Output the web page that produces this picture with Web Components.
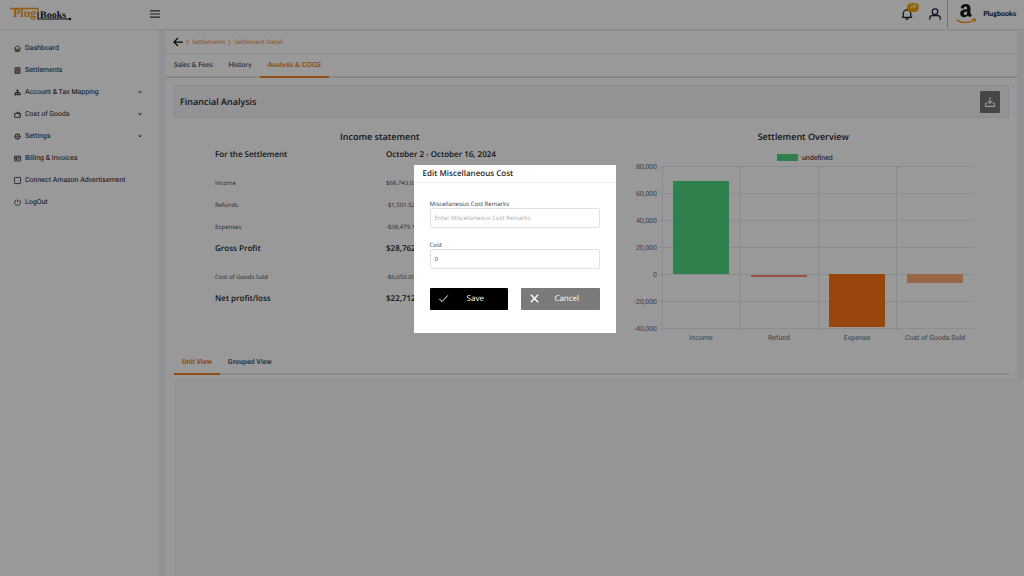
<!DOCTYPE html>
<html lang="en">
<head>
<meta charset="utf-8">
<meta name="viewport" content="width=device-width, initial-scale=1">
<title>Plugbooks - Settlement Detail</title>
<style>
html,body{margin:0;min-height:100%}
body{font-family:"Open Sans","Noto Sans",sans-serif;background:#f8f8fb;color:#212529;text-rendering:geometricPrecision}
</style>
</head>
<body>
<plug-app></plug-app>
<script>
const define=(name,html,setup)=>customElements.define(name,class extends HTMLElement{
  connectedCallback(){
    if(this.shadowRoot)return;
    const root=this.attachShadow({mode:"open"});
    const t=document.createElement("template");
    t.innerHTML="<style>*{box-sizing:border-box}button,input{text-rendering:inherit}</style>"+(typeof html==="function"?html(this):html);
    root.append(t.content.cloneNode(true));
    if(setup)setup(this,root);
  }
});

const icons={
  home:'<path d="M.5 8 8 1.500 15.500 8M3 7v7.500h10V7M5.500 9.500h5M6.500 14v-3h3v3"/>',
  book:'<path d="M2.500 1.500h11v13h-11zM5 4.500h6v4H5zM2.500 11.500h11"/>',
  tree:'<path fill="currentColor" stroke="none" d="M6 1.500h4v4H6zM1 10h4v4H1zM6 10h4v4H6zM11 10h4v4h-4z"/><path d="M8 5v5M3 10V8h10v2"/>',
  wallet:'<path d="M1.500 5.500h13v9h-13zM4 5.500l7-3.500 1.500 3.500M10.500 9h4"/>',
  gear:'<circle cx="8" cy="8" r="5.500"/><circle cx="8" cy="8" r="2"/><path stroke-width="2" d="M8 .5v2M8 13.500v2M.5 8h2M13.500 8h2M2.700 2.700l1.500 1.500M11.800 11.800l1.500 1.500M2.700 13.300l1.500-1.500M11.800 4.200l1.500-1.500"/>',
  card:'<rect x="1" y="2.500" width="14" height="11" rx="1"/><path d="M1 5.500h14M4 8.500h3v2H4zM9 9.500h3.500"/>',
  square:'<rect x="1" y="1" width="14" height="14" rx="1.500"/>',
  power:'<path d="M8 1v6.500M4.500 2.500a6.500 6.500 0 1 0 7 0"/>',
  menu:'<path d="M0 3h16M0 8h16M0 13h16"/>',
  chevron:'<path stroke-width="4" d="m2 5 6 5.500L14 5"/>',
  next:'<path stroke-width="3" d="m5 0 6 8-6 8"/>',
  back:'<path stroke-width="2" d="M16 8H1.500M8 1.500 1.500 8 8 14.500"/>',
  bell:'<path d="M1 12.500h14M3 12.500V7.500a5 5 0 0 1 10 0v5M6 13a2 2 0 0 0 4 0M8 1v1.500"/>',
  user:'<circle cx="8" cy="5" r="3.700"/><path d="M1 15.500v-2a3.500 3.500 0 0 1 3.500-3.500h7a3.500 3.500 0 0 1 3.500 3.500v2"/>',
  download:'<path d="M8 .5v9M4.500 6.500 8 10l3.500-3.500M4 10H1v5h14v-5h-3"/>',
  check:'<path d="m.5 9 5 4.500L15.500 2.500"/>',
  close:'<path stroke-width="2.500" d="m1.500 1.500 13 13M14.500 1.500l-13 13"/>'
};
define("ui-icon",el=>`<style>:host{display:inline-flex;flex:none;width:var(--size,7px);height:var(--size,7px)}svg{width:100%;height:100%;overflow:visible}</style>
<svg viewBox="0 0 16 16" fill="none" stroke="currentColor" stroke-width="1.7" aria-hidden="true">${icons[el.getAttribute("name")]}</svg>`);

define("plug-logo",`<style>:host{display:block}svg{display:block;width:62px;height:15px}text{font-family:"Liberation Serif",serif;font-weight:700}</style>
<svg viewBox="0 0 62 15" role="img" aria-label="PlugBooks">
<path d="M0 2.500h28.500M28 2v4" stroke="#f7941d" stroke-width="1.300" fill="none"/>
<text x="3" y="11" font-size="12" fill="#f7941d">Plug</text>
<text x="30" y="12" font-size="10" fill="#14161c">Books</text>
<path d="M28 6v7h32" stroke="#14161c" stroke-width="1.200" fill="none"/><circle cx="60" cy="13" r="1.200" fill="#14161c"/>
</svg>`);

define("top-bar",`<style>
:host{display:flex;align-items:center;height:30px;background:#fff;border-bottom:1px solid #e4e8ee;padding:0 8px 0 10px}
plug-logo{flex:none;width:140px;padding-bottom:2px}
button{border:0;background:none;padding:0;color:#343a46;display:flex;position:relative}
.menu{--size:10px;padding-bottom:2px}
.right{margin-left:auto;display:flex;align-items:center;height:100%;padding-bottom:2px}
.bell,.user{--size:12px;color:#222730}.bell{margin-right:16px}
.badge{position:absolute;left:6px;top:-5px;min-width:12px;height:9px;border-radius:5px;background:#f7a100;color:#fff;font:600 5px/9px "Open Sans",sans-serif;text-align:center}
.brand{display:flex;align-items:center;height:28px;border-left:1px solid #f5b942;margin-left:6px;padding-left:8px;gap:7px;font:900 7px/10px Lato,sans-serif;color:#212529}
.amz{width:20px;height:21px;display:block}
</style>
<plug-logo></plug-logo>
<button class="menu" aria-label="Menu"><ui-icon name="menu"></ui-icon></button>
<div class="right"><button class="bell" aria-label="Notifications"><ui-icon name="bell"></ui-icon><span class="badge">28</span></button>
<button class="user" aria-label="Account"><ui-icon name="user"></ui-icon></button>
<div class="brand"><svg class="amz" viewBox="0 0 19 20" aria-hidden="true"><path d="M4.500 5C4.700 2 6.800 1 9.200 1c2.900 0 4.500 1.300 4.500 3.800v5l1.500 2-2.200 1.800-1.700-1.700C9.400 14.300 4 14.300 4 10c0-3.200 3-4 6.600-4.100 0-1.700-.2-2.600-1.500-2.600-.9 0-1.400.6-1.600 1.900zM10.600 8c-1.700.1-3.200.4-3.200 2 0 2.300 3.200 2 3.200-1z" fill="#16181d" fill-rule="evenodd"/><path d="M.5 16c5 3.500 11.500 3.300 16 .8M15.500 15.800l2.700-.2-.6 2.400" fill="none" stroke="#f7941d" stroke-width="1.400"/></svg><span>Plugbooks</span></div></div>`);

define("nav-item",el=>`<style>
:host{display:block}
a{display:flex;align-items:center;height:22px;gap:4px;color:#14181f;text-decoration:none;font:400 7px/10px Roboto,sans-serif}
.chev{margin-left:auto;--size:4px}
</style><a href="#"><ui-icon name="${el.getAttribute("icon")}"></ui-icon><slot></slot>${el.hasAttribute("sub")?'<ui-icon class="chev" name="chevron"></ui-icon>':""}</a>`);

define("side-nav",`<style>:host{display:block;background:#fff;padding:7px 17px 0 14px}</style>
<nav><nav-item icon="home">Dashboard</nav-item><nav-item icon="book">Settlements</nav-item><nav-item icon="tree" sub>Account &amp; Tax Mapping</nav-item><nav-item icon="wallet" sub>Cost of Goods</nav-item><nav-item icon="gear" sub>Settings</nav-item><nav-item icon="card">Billing &amp; Invoices</nav-item><nav-item icon="square">Connect Amazon Advertisement</nav-item><nav-item icon="power">LogOut</nav-item></nav>`);

define("crumb-bar",`<style>
:host{display:flex;align-items:center;height:23px;padding:0 7px;gap:2px;border-bottom:1px solid #e4e8ee;color:#f58220;font:6px/10px "Open Sans",sans-serif}
button{border:0;background:none;padding:0;display:flex;color:#111;--size:10px}
a{color:inherit;text-decoration:none}ui-icon[name=next]{--size:5px;color:#f59b20}
</style><button aria-label="Back"><ui-icon name="back"></ui-icon></button><ui-icon name="next"></ui-icon><a href="#">Settlements</a><ui-icon name="next"></ui-icon><a href="#">Settlement Detail</a>`);

define("tab-bar",`<style>
:host{display:flex;height:24px;border-bottom:2px solid #e2e5e9}
::slotted(button){border:0;border-bottom:2px solid transparent;background:none;margin:0 0 -2px;padding:0 8px;font:700 7px/10px var(--tab-font,Roboto),sans-serif;color:#59616b;text-rendering:inherit}
::slotted(button[aria-selected=true]){color:#f07814;border-bottom:2px solid #f58220}
</style><slot></slot>`);

define("income-statement",`<style>
:host{display:block}
h2{margin:0;font:600 9px/14px "Open Sans",sans-serif;text-align:center;color:#212529}
table{border-collapse:collapse;margin:0 0 0 47px;color:#41474f;font:6px/10px "Open Sans",sans-serif}
th,td{padding:0;height:22px;text-align:left;font-weight:400}
th:first-child{width:171px}
.b th,.b td{font:600 8px/10px "Open Sans",sans-serif;color:#212529}
.gap th,.gap td{padding-top:6px;height:28px}
</style><h2>Income statement</h2>
<table><tbody>
<tr class="b"><th scope="row">For the Settlement</th><td>October 2 - October 16, 2024</td></tr>
<tr class="gap"><th scope="row">Income</th><td>$68,743.02</td></tr>
<tr><th scope="row">Refunds</th><td>-$1,501.52</td></tr>
<tr><th scope="row">Expenses</th><td>-$38,479.18</td></tr>
<tr class="b"><th scope="row">Gross Profit</th><td>$28,762.32</td></tr>
<tr class="gap"><th scope="row">Cost of Goods Sold</th><td>-$6,050.00</td></tr>
<tr class="b"><th scope="row">Net profit/loss</th><td>$22,712.32</td></tr>
</tbody></table>`);

define("overview-chart",()=>{
  const ys=[16,43,70,97,124,151,178],labels=["80,000","60,000","40,000","20,000","0","-20,000","-40,000"];
  const xs=[32,110,188,266];
  const names=["Income","Refund","Expense","Cost of Goods Sold"];
  const bars=[[31,93,"#50d580"],[125,2,"#ff8a78"],[124,53,"#fd7518"],[124,9,"#ffac74"]];
  return `<style>:host{display:block}h2{margin:0;font:600 9px/14px "Open Sans",sans-serif;text-align:center;color:#212529}
svg{display:block;width:346px;height:200px;margin:6px auto 0;font:7px Roboto,sans-serif;fill:#666c75}</style>
<h2>Settlement Overview</h2>
<svg viewBox="0 0 346 200" role="img" aria-label="Settlement overview bar chart">
<g fill="#e6e9ed">${ys.map(y=>`<rect x="29" y="${y}" width="314" height="1"/>`).join("")}${xs.map(x=>`<rect x="${x}" y="16" width="1" height="166"/>`).join("")}</g>
${labels.map((l,i)=>`<text x="27" y="${ys[i]+3}" text-anchor="end">${l}</text>`).join("")}
${bars.map((b,i)=>`<rect x="${xs[i]+11}" y="${b[0]}" width="56" height="${b[1]}" fill="${b[2]}"/>`).join("")}
${names.map((n,i)=>`<text x="${xs[i]+39}" y="190" text-anchor="middle">${n}</text>`).join("")}
<rect x="147" y="4" width="21" height="7" fill="#50d580"/><text x="172" y="10" fill="#222">undefined</text>
</svg>`});

define("settlement-page",`<style>
:host{display:flex;flex-direction:column;background:#fff}
.top{--tab-font:Lato}
.body{padding:7px 8px 0}
.band{display:flex;align-items:center;justify-content:space-between;height:33px;margin-bottom:12px;padding:0 8px 0 5px;background:#f5f5fa;border:1px solid #e8eaf2}
h1{margin:0;font:600 9px/14px "Open Sans",sans-serif;color:#212529}
.dl{display:flex;align-items:center;justify-content:center;width:20px;height:22px;border:0;border-radius:1px;background:#757575;color:#fff;padding:0;--size:10px}
.row{display:grid;grid-template-columns:1fr 1fr;margin:0 -6px 1px}
.rest{flex:1;margin:4px -7px 0 8px;background:#f8f8fb}
</style>
<crumb-bar></crumb-bar>
<tab-bar class="top" role="tablist"><button role="tab">Sales &amp; Fees</button><button role="tab">History</button><button role="tab" aria-selected="true">Analysis &amp; COGS</button></tab-bar>
<div class="body"><div class="band"><h1>Financial Analysis</h1><button class="dl" aria-label="Download"><ui-icon name="download"></ui-icon></button></div>
<div class="row"><income-statement></income-statement><overview-chart></overview-chart></div>
<tab-bar role="tablist"><button role="tab" aria-selected="true">Unit View</button><button role="tab">Grouped View</button></tab-bar></div>
<div class="rest"></div>`);

define("cost-field",el=>`<style>
:host{display:block}
label{display:block;font:6px/8px "Open Sans",sans-serif;color:#343a46}
input{display:block;width:100%;height:20px;border:1px solid #dde1ea;border-radius:2px;padding:0 4px;font:6px/10px "Open Sans",sans-serif;color:#343a46;background:#fff;outline:0}
input::placeholder{color:#a8abb2}
</style><label for="f"><slot></slot></label><input id="f" type="text" placeholder="${el.getAttribute("placeholder")||""}" value="${el.getAttribute("value")||""}">`);

define("edit-modal",`<style>
:host{position:fixed;inset:0;display:flex;align-items:center;justify-content:center;padding:0 0 79px 5px;background:rgba(0,0,0,.4)}
section{width:202px;background:#fff;padding-bottom:23px}
h2{margin:0;height:18px;padding:2px 9px;border-bottom:1px solid #eceef2;font:600 8px/14px "Open Sans",sans-serif;color:#212529}
form{padding:17px 16px 0;display:grid;gap:13px}
.actions{display:grid;grid-template-columns:1fr 1fr;gap:13px;padding-top:6px}
button{display:flex;align-items:center;height:22px;border:0;border-radius:1px;background:#000;color:#fff;padding:0 5px 0 9px;font:400 8px/12px "Open Sans",sans-serif;--size:9px}
button span{flex:1;text-align:center}
.cancel{background:#7a7a7a}
</style>
<section role="dialog" aria-label="Edit Miscellaneous Cost"><h2>Edit Miscellaneous Cost</h2>
<form><cost-field placeholder="Enter Miscellaneous Cost Remarks">Miscellaneous Cost Remarks</cost-field><cost-field value="0">Cost</cost-field>
<div class="actions"><button type="button"><ui-icon name="check"></ui-icon><span>Save</span></button><button type="button" class="cancel"><ui-icon name="close"></ui-icon><span>Cancel</span></button></div></form></section>`);

define("plug-app",`<style>
:host{display:flex;flex-direction:column;min-height:100vh}
.shell{flex:1;display:grid;grid-template-columns:159px 1fr;background:#edf2fa}
settlement-page{margin:1px 7px 0}
</style><top-bar></top-bar><div class="shell"><side-nav></side-nav><settlement-page></settlement-page></div><edit-modal></edit-modal>`);
</script>
</body>
</html>
